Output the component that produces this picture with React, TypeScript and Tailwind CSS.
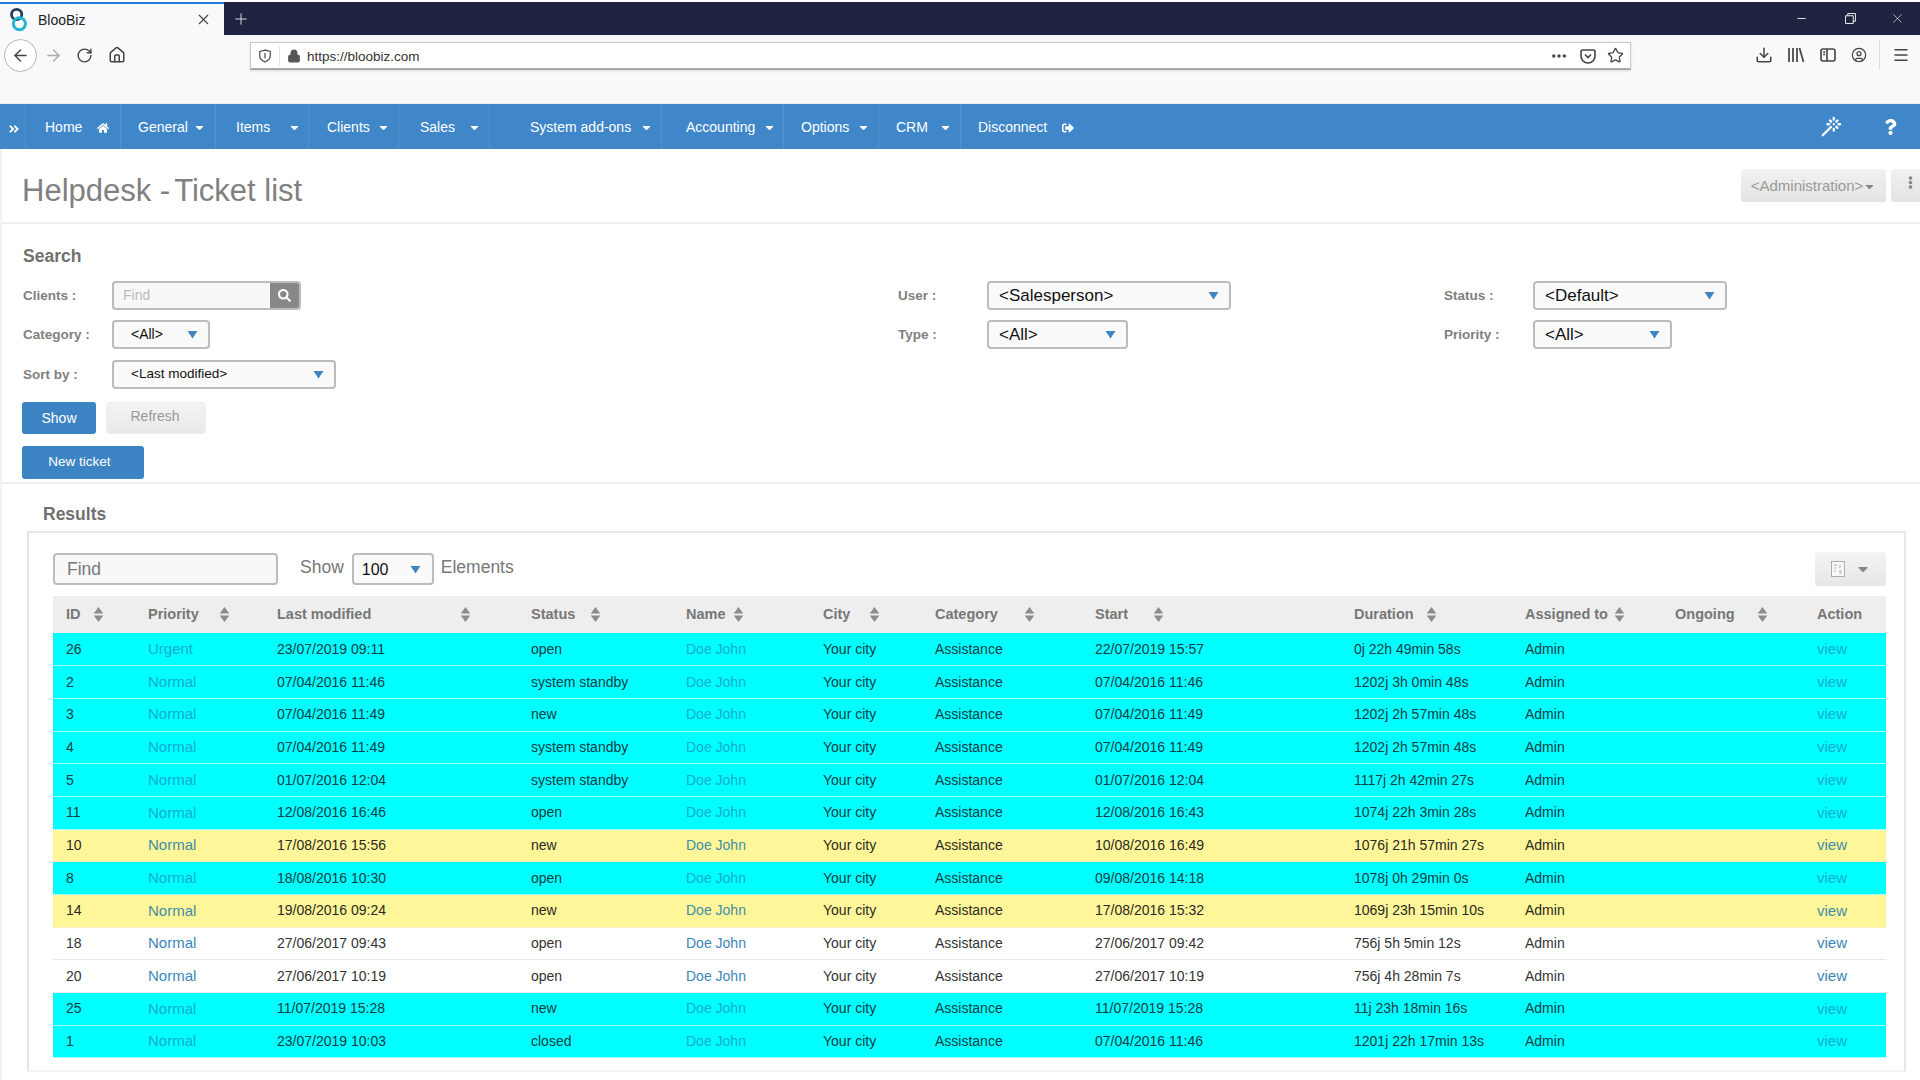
import { ArrowLeft, ArrowRight, RotateCw, House, Lock, Star, Download, Menu, CircleUser, Minus, Plus, X, Ellipsis, Wand } from "lucide-react";
import { FaHome, FaCaretDown, FaSignOutAlt, FaQuestion, FaSearch, FaAngleDoubleRight, FaEllipsisV } from "react-icons/fa";

const navItems = [
  { label: "General", w: "w-[95px]", pad: "pl-[17px]", gap: "ml-[5px]" },
  { label: "Items", w: "w-[93px]", pad: "pl-[20px]", gap: "ml-[18px]" },
  { label: "Clients", w: "w-[90px]", pad: "pl-[18px]", gap: "ml-[7px]" },
  { label: "Sales", w: "w-[91px]", pad: "pl-[21px]", gap: "ml-[13px]" },
  { label: "System add-ons", w: "w-[172px]", pad: "pl-[40px]", gap: "ml-[9px]" },
  { label: "Accounting", w: "w-[122px]", pad: "pl-[24px]", gap: "ml-[8px]" },
  { label: "Options", w: "w-[95px]", pad: "pl-[17px]", gap: "ml-[8px]" },
  { label: "CRM", w: "w-[82px]", pad: "pl-[17px]", gap: "ml-[11px]" },
];

const columns = [
  { label: "ID", span: "w-[27px]" },
  { label: "Priority", span: "w-[71px]" },
  { label: "Last modified", span: "w-[183px]" },
  { label: "Status", span: "w-[59px]" },
  { label: "Name", span: "w-[47px]" },
  { label: "City", span: "w-[46px]" },
  { label: "Category", span: "w-[89px]" },
  { label: "Start", span: "w-[58px]" },
  { label: "Duration", span: "w-[72px]" },
  { label: "Assigned to", span: "w-[89px]" },
  { label: "Ongoing", span: "w-[82px]" },
  { label: "Action", span: "" },
];

const tickets = [
  { id: 26, kind: "c", priority: "Urgent", modified: "23/07/2019 09:11", status: "open", start: "22/07/2019 15:57", duration: "0j 22h 49min 58s" },
  { id: 2, kind: "c", priority: "Normal", modified: "07/04/2016 11:46", status: "system standby", start: "07/04/2016 11:46", duration: "1202j 3h 0min 48s" },
  { id: 3, kind: "c", priority: "Normal", modified: "07/04/2016 11:49", status: "new", start: "07/04/2016 11:49", duration: "1202j 2h 57min 48s" },
  { id: 4, kind: "c", priority: "Normal", modified: "07/04/2016 11:49", status: "system standby", start: "07/04/2016 11:49", duration: "1202j 2h 57min 48s" },
  { id: 5, kind: "c", priority: "Normal", modified: "01/07/2016 12:04", status: "system standby", start: "01/07/2016 12:04", duration: "1117j 2h 42min 27s" },
  { id: 11, kind: "c", priority: "Normal", modified: "12/08/2016 16:46", status: "open", start: "12/08/2016 16:43", duration: "1074j 22h 3min 28s" },
  { id: 10, kind: "y", priority: "Normal", modified: "17/08/2016 15:56", status: "new", start: "10/08/2016 16:49", duration: "1076j 21h 57min 27s" },
  { id: 8, kind: "c", priority: "Normal", modified: "18/08/2016 10:30", status: "open", start: "09/08/2016 14:18", duration: "1078j 0h 29min 0s" },
  { id: 14, kind: "y", priority: "Normal", modified: "19/08/2016 09:24", status: "new", start: "17/08/2016 15:32", duration: "1069j 23h 15min 10s" },
  { id: 18, kind: "w", priority: "Normal", modified: "27/06/2017 09:43", status: "open", start: "27/06/2017 09:42", duration: "756j 5h 5min 12s" },
  { id: 20, kind: "w", priority: "Normal", modified: "27/06/2017 10:19", status: "open", start: "27/06/2017 10:19", duration: "756j 4h 28min 7s" },
  { id: 25, kind: "c", priority: "Normal", modified: "11/07/2019 15:28", status: "new", start: "11/07/2019 15:28", duration: "11j 23h 18min 16s" },
  { id: 1, kind: "c", priority: "Normal", modified: "23/07/2019 10:03", status: "closed", start: "07/04/2016 11:46", duration: "1201j 22h 17min 13s" },
];

const rowStyles: Record<string, { row: string; link: string; text: string }> = {
  c: { row: "bg-[#00ffff] border-[#a6ffff]", link: "text-[#12add2]", text: "text-[#123c46]" },
  y: { row: "bg-[#fff599] border-[#f4eebc]", link: "text-[#3f8ea6]", text: "text-[#2a2a22]" },
  w: { row: "bg-white border-[#e8e8e8]", link: "text-[#3a87b8]", text: "text-[#333333]" },
};

const SortIcon = () => (
  <svg viewBox="0 0 10 16" className="w-[11px] h-[17px] shrink-0 text-[#8c8c8c]" fill="currentColor">
    <path d="M5 1 9.5 7H.5z" />
    <path d="M5 15 .5 9h9z" />
  </svg>
);

const Caret = () => (
  <svg viewBox="0 0 12 10" className="w-[11px] h-[9px] shrink-0 text-[#3f85c0]" fill="currentColor">
    <path d="M0.5 1h11L6 9.5z" />
  </svg>
);

const Select = ({ value, width, size = "text-[17px]" }: { value: string; width: string; size?: string }) => (
  <div className={`${width} h-[29px] flex items-center justify-between pr-[10px] bg-[#fafafa] border-2 border-[#bcbcbc] rounded-[4px] text-[#111] ${size}`}>
    <span>{value}</span>
    <Caret />
  </div>
);

const Field = ({ label, children }: { label: string; children: React.ReactNode }) => (
  <div className="flex items-center h-[29px]">
    <label className="w-[89px] pt-[2px] text-[13.5px] font-bold text-[#808080]">{label}</label>
    {children}
  </div>
);

export default function App() {
  return (
    <div className="w-[1920px] h-[1080px] overflow-hidden bg-white flex flex-col font-['Liberation_Sans',Arial,sans-serif]">
      {/* browser chrome */}
      <div className="h-[35px] pt-[2px] bg-white shrink-0">
        <div className="h-[33px] flex items-center bg-[#202340] text-white">
          <div className="w-[224px] h-[33px] flex items-center bg-[#f9f9fb] border-t-2 border-[#1a7fd8] pl-[9px] pr-[12px] text-[#222]">
            <svg viewBox="0 0 20 28" className="w-[19px] h-[26px] shrink-0">
              <circle cx="8" cy="8" r="5.5" fill="none" stroke="#24405f" strokeWidth="3" />
              <circle cx="11" cy="18" r="6.5" fill="none" stroke="#26b3d4" strokeWidth="3.2" />
            </svg>
            <span className="ml-[10px] mt-[2px] text-[14px] flex-1">BlooBiz</span>
            <X className="w-[17px] h-[17px] text-[#444]" strokeWidth={1.5} />
          </div>
          <Plus className="ml-[8px] w-[18px] h-[18px] text-[#ddd]" strokeWidth={1.3} />
          <div className="ml-auto flex items-center text-white">
            <Minus className="w-[13px] h-[13px] mr-[37px]" strokeWidth={1.5} />
            <svg viewBox="0 0 12 12" className="w-[11px] h-[11px] mr-[34px]" fill="none" stroke="currentColor" strokeWidth="1">
              <path d="M3 3V.6h8.4V9H9M.6 3h8.4v8.4H.6z" />
            </svg>
            <X className="w-[15px] h-[15px] mr-[15px]" strokeWidth={1} />
          </div>
        </div>
      </div>

      <div className="h-[69px] shrink-0 bg-[#f9f9fb] border-b border-[#eeeeee]">
        <div className="h-[40px] flex items-center text-[#444]">
          <div className="ml-[4px] w-[33px] h-[33px] rounded-full border border-[#b5b5b5] bg-white flex items-center justify-center">
            <ArrowLeft className="w-[19px] h-[19px]" strokeWidth={1.8} />
          </div>
          <ArrowRight className="ml-[7px] w-[19px] h-[19px] text-[#aaa]" strokeWidth={1.8} />
          <RotateCw className="ml-[13px] w-[17px] h-[17px]" strokeWidth={2} />
          <House className="ml-[15px] w-[18px] h-[18px]" strokeWidth={2} />
          <div className="ml-[124px] w-[1381px] h-[28px] mt-[-6px] translate-y-[4px] flex items-center bg-white border border-[#c9c9c9] border-b-2 border-b-[#aaa] shadow-sm">
            <svg viewBox="0 0 16 16" className="ml-[7px] w-[14px] h-[14px]" fill="none" stroke="#555" strokeWidth="1.5">
              <path d="M8 1.2 2 2.8v5c0 3.4 2.6 5.6 6 7 3.4-1.4 6-3.6 6-7v-5z" />
              <path d="M8 4.5v6" />
            </svg>
            <div className="ml-[7px] w-px h-[20px] bg-[#e4e4e4]" />
            <Lock className="ml-[7px] w-[14px] h-[14px] text-[#555] fill-[#555]" strokeWidth={2} />
            <span className="ml-[6px] mt-[3px] text-[13.5px] text-[#333]">https://bloobiz.com</span>
            <div className="ml-auto flex items-center">
              <Ellipsis className="w-[18px] h-[18px]" strokeWidth={2.6} />
              <svg viewBox="0 0 16 16" className="ml-[12px] w-[16px] h-[16px]" fill="none" stroke="#444" strokeWidth="1.6">
                <path d="M2.5 2h11A1.5 1.5 0 0 1 15 3.5V8a7 7 0 0 1-14 0V3.5A1.5 1.5 0 0 1 2.5 2z" />
                <path d="m5 6.5 3 3 3-3" />
              </svg>
              <Star className="ml-[11px] mr-[6px] w-[17px] h-[17px]" strokeWidth={1.8} />
            </div>
          </div>
          <Download className="ml-[124px] w-[18px] h-[18px]" strokeWidth={2} />
          <svg viewBox="0 0 18 16" className="ml-[14px] w-[18px] h-[16px]" fill="none" stroke="#444" strokeWidth="1.7">
            <path d="M2 1v14M6 1v14M10 1v14M12.5 1l4 14" />
          </svg>
          <svg viewBox="0 0 16 16" className="ml-[15px] w-[16px] h-[16px]" fill="none" stroke="#444" strokeWidth="1.6">
            <rect x="1" y="2" width="14" height="12" rx="2" />
            <path d="M7 2v12M3.2 5h2M3.2 7.5h2" />
          </svg>
          <CircleUser className="ml-[15px] w-[16px] h-[16px]" strokeWidth={1.8} />
          <div className="ml-[12px] w-px h-[30px] bg-[#dddddd]" />
          <Menu className="ml-[12px] w-[18px] h-[18px]" strokeWidth={2} />
        </div>
      </div>

      {/* app menu */}
      <nav className="h-[45px] shrink-0 flex items-stretch bg-[#3f87c9] text-white text-[14px]">
        <div className="w-[26px] flex items-center justify-center border-r border-white/10">
          <FaAngleDoubleRight className="w-[12px] h-[12px] mt-[4px] ml-[2px]" />
        </div>
        <div className="w-[95px] flex items-center pl-[19px] pt-px border-r border-white/10">
          <span>Home</span>
          <FaHome className="ml-[15px] w-[12px] h-[12px] mt-[2px]" />
        </div>
        {navItems.map(item => (
          <div key={item.label} className={`${item.w} ${item.pad} flex items-center pt-px border-r border-white/10`}>
            <span>{item.label}</span>
            <FaCaretDown className={`${item.gap} w-[13px] h-[13px]`} />
          </div>
        ))}
        <div className="flex items-center pl-[17px] pt-px">
          <span>Disconnect</span>
          <FaSignOutAlt className="ml-[15px] w-[12px] h-[12px] mt-[2px]" />
        </div>
        <div className="ml-auto flex items-center">
          <Wand className="w-[22px] h-[22px] mr-[42px]" strokeWidth={2.5} />
          <FaQuestion className="w-[13px] h-[16px] mr-[23px]" />
        </div>
      </nav>

      <main className="flex-1 border-l-2 border-[#f2f2f2]">
        {/* title */}
        <div className="h-[75px] flex justify-between border-b-2 border-[#eeeeee]">
          <h1 className="ml-[20px] mt-[22px] text-[31px] leading-[40px] text-[#808080]">
            Helpdesk -<span className="ml-[4px]">Ticket list</span>
          </h1>
          <div className="mt-[20px] flex items-start">
            <button className="w-[145px] h-[33px] pt-[2px] flex items-center justify-center rounded-[3px] bg-gradient-to-b from-[#f2f2f2] to-[#e3e3e3] text-[#999] text-[15px]">
              &lt;Administration&gt;<FaCaretDown className="w-[13px] h-[13px] text-[#888]" />
            </button>
            <button className="ml-[5px] w-[29px] h-[33px] flex justify-center pt-[7px] pl-[9px] rounded-l-[3px] bg-gradient-to-b from-[#f2f2f2] to-[#e3e3e3] text-[#888]">
              <FaEllipsisV className="w-[13px] h-[13px]" />
            </button>
          </div>
        </div>

        {/* search */}
        <section className="pl-[21px] pt-[21px] border-b-2 border-[#eeeeee] h-[260px]">
          <h2 className="mb-[14px] text-[17.5px] leading-[22px] font-bold text-[#707070]">Search</h2>
          <div className="grid grid-cols-[875px_546px_1fr]">
            <div className="flex flex-col gap-[10px]">
              <Field label="Clients :">
                <div className="w-[189px] h-[29px] flex border-2 border-[#bcbcbc] rounded-[4px] bg-[#f8f8f8] overflow-hidden">
                  <span className="flex-1 pl-[9px] text-[14px] leading-[25px] text-[#bbb]">Find</span>
                  <div className="w-[29px] flex items-center justify-center bg-[#888] text-white">
                    <FaSearch className="w-[13px] h-[13px]" />
                  </div>
                </div>
              </Field>
              <Field label="Category :">
                <Select value="<All>" width="w-[98px] pl-[17px]" size="text-[14px]" />
              </Field>
              <div className="mt-px">
                <Field label="Sort by :">
                  <Select value="<Last modified>" width="w-[224px] pl-[17px]" size="text-[13.5px]" />
                </Field>
              </div>
            </div>
            <div className="flex flex-col gap-[10px]">
              <Field label="User :">
                <Select value="<Salesperson>" width="w-[244px] pl-[10px]" />
              </Field>
              <Field label="Type :">
                <Select value="<All>" width="w-[141px] pl-[10px]" />
              </Field>
            </div>
            <div className="flex flex-col gap-[10px]">
              <Field label="Status :">
                <Select value="<Default>" width="w-[194px] pl-[10px]" />
              </Field>
              <Field label="Priority :">
                <Select value="<All>" width="w-[139px] pl-[10px]" />
              </Field>
            </div>
          </div>
          <div className="-ml-px mt-[13px] flex gap-[10px]">
            <button className="w-[74px] h-[32px] rounded-[3px] bg-[#3d84c4] text-white text-[14px]">Show</button>
            <button className="w-[100px] h-[32px] pb-[3px] pr-[2px] rounded-[3px] bg-gradient-to-b from-[#f4f4f4] to-[#e8e8e8] border border-[#eeeeee] text-[#999] text-[14px]">Refresh</button>
          </div>
          <button className="block -ml-px mt-[12px] w-[122px] h-[33px] pr-[7px] rounded-[3px] bg-[#3d84c4] text-white text-[13.5px]">New ticket</button>
        </section>

        {/* results */}
        <section className="pt-[19px]">
          <h2 className="ml-[41px] mb-[6px] text-[17.5px] leading-[22px] font-bold text-[#707070]">Results</h2>
          <div className="ml-[25px] mr-[14px] h-[541px] border-2 border-[#e6e6e6] border-b-[#f4f4f4] pl-[24px] pr-[18px] pt-[20px]">
            <div className="flex items-start h-[32px]">
              <div className="w-[225px] h-[32px] flex items-center pl-[12px] border-2 border-[#bcbcbc] rounded-[4px] bg-[#f8f8f8] text-[17.5px] text-[#777]">Find</div>
              <span className="ml-[22px] mt-[1px] text-[17.5px] text-[#777]">Show</span>
              <div className="ml-[8px] w-[82px] h-[32px] flex items-center justify-between pl-[8px] pr-[11px] border-2 border-[#bcbcbc] rounded-[4px] bg-[#fafafa] text-[16px] text-[#111]">
                <span className="mt-[2px]">100</span>
                <Caret />
              </div>
              <span className="ml-[7px] mt-[1px] text-[17.5px] text-[#777]">Elements</span>
              <button className="ml-auto -mt-px w-[71px] h-[34px] flex items-center justify-center gap-[10px] rounded-[3px] bg-gradient-to-b from-[#f4f4f4] to-[#e6e6e6]">
                <svg viewBox="0 0 14 16" className="w-[14px] h-[16px]" fill="none" stroke="#999" strokeWidth="0.8">
                  <rect x="0.5" y="0.5" width="13" height="15" fill="#f8f8f8" />
                  <path d="M3 4h3M3 7h2M3 10h2M9 4v3M8 10h3M8 12h3" />
                </svg>
                <FaCaretDown className="w-[16px] h-[16px] text-[#888]" />
              </button>
            </div>

            <table className="mt-[11px] w-full table-fixed border-collapse text-[14px]">
              <colgroup>
                <col className="w-[82px]" />
                <col className="w-[129px]" />
                <col className="w-[254px]" />
                <col className="w-[155px]" />
                <col className="w-[137px]" />
                <col className="w-[112px]" />
                <col className="w-[160px]" />
                <col className="w-[259px]" />
                <col className="w-[171px]" />
                <col className="w-[150px]" />
                <col className="w-[142px]" />
                <col className="w-[82px]" />
              </colgroup>
              <thead>
                <tr className="h-[37px] bg-[#eeeeee]">
                  {columns.map(col => (
                    <th key={col.label} className="pl-[13px] text-left text-[14.5px] font-bold text-[#777]">
                      <div className="flex items-center">
                        <span className={`${col.span} whitespace-nowrap`}>{col.label}</span>
                        {col.span && <SortIcon />}
                      </div>
                    </th>
                  ))}
                </tr>
              </thead>
              <tbody>
                {tickets.map(t => {
                  const s = rowStyles[t.kind];
                  return (
                    <tr key={t.id} className={`h-[32.7px] border-b ${s.row} ${s.text}`}>
                      <td className="pl-[13px]">{t.id}</td>
                      <td className={`pl-[13px] text-[15px] ${s.link}`}>{t.priority}</td>
                      <td className="pl-[13px]">{t.modified}</td>
                      <td className="pl-[13px]">{t.status}</td>
                      <td className={`pl-[13px] ${s.link}`}>Doe John</td>
                      <td className="pl-[13px]">Your city</td>
                      <td className="pl-[13px]">Assistance</td>
                      <td className="pl-[13px]">{t.start}</td>
                      <td className="pl-[13px]">{t.duration}</td>
                      <td className="pl-[13px]">Admin</td>
                      <td className="pl-[13px]" />
                      <td className={`pl-[13px] text-[15px] ${s.link}`}>view</td>
                    </tr>
                  );
                })}
              </tbody>
            </table>
          </div>
        </section>
      </main>
    </div>
  );
}
